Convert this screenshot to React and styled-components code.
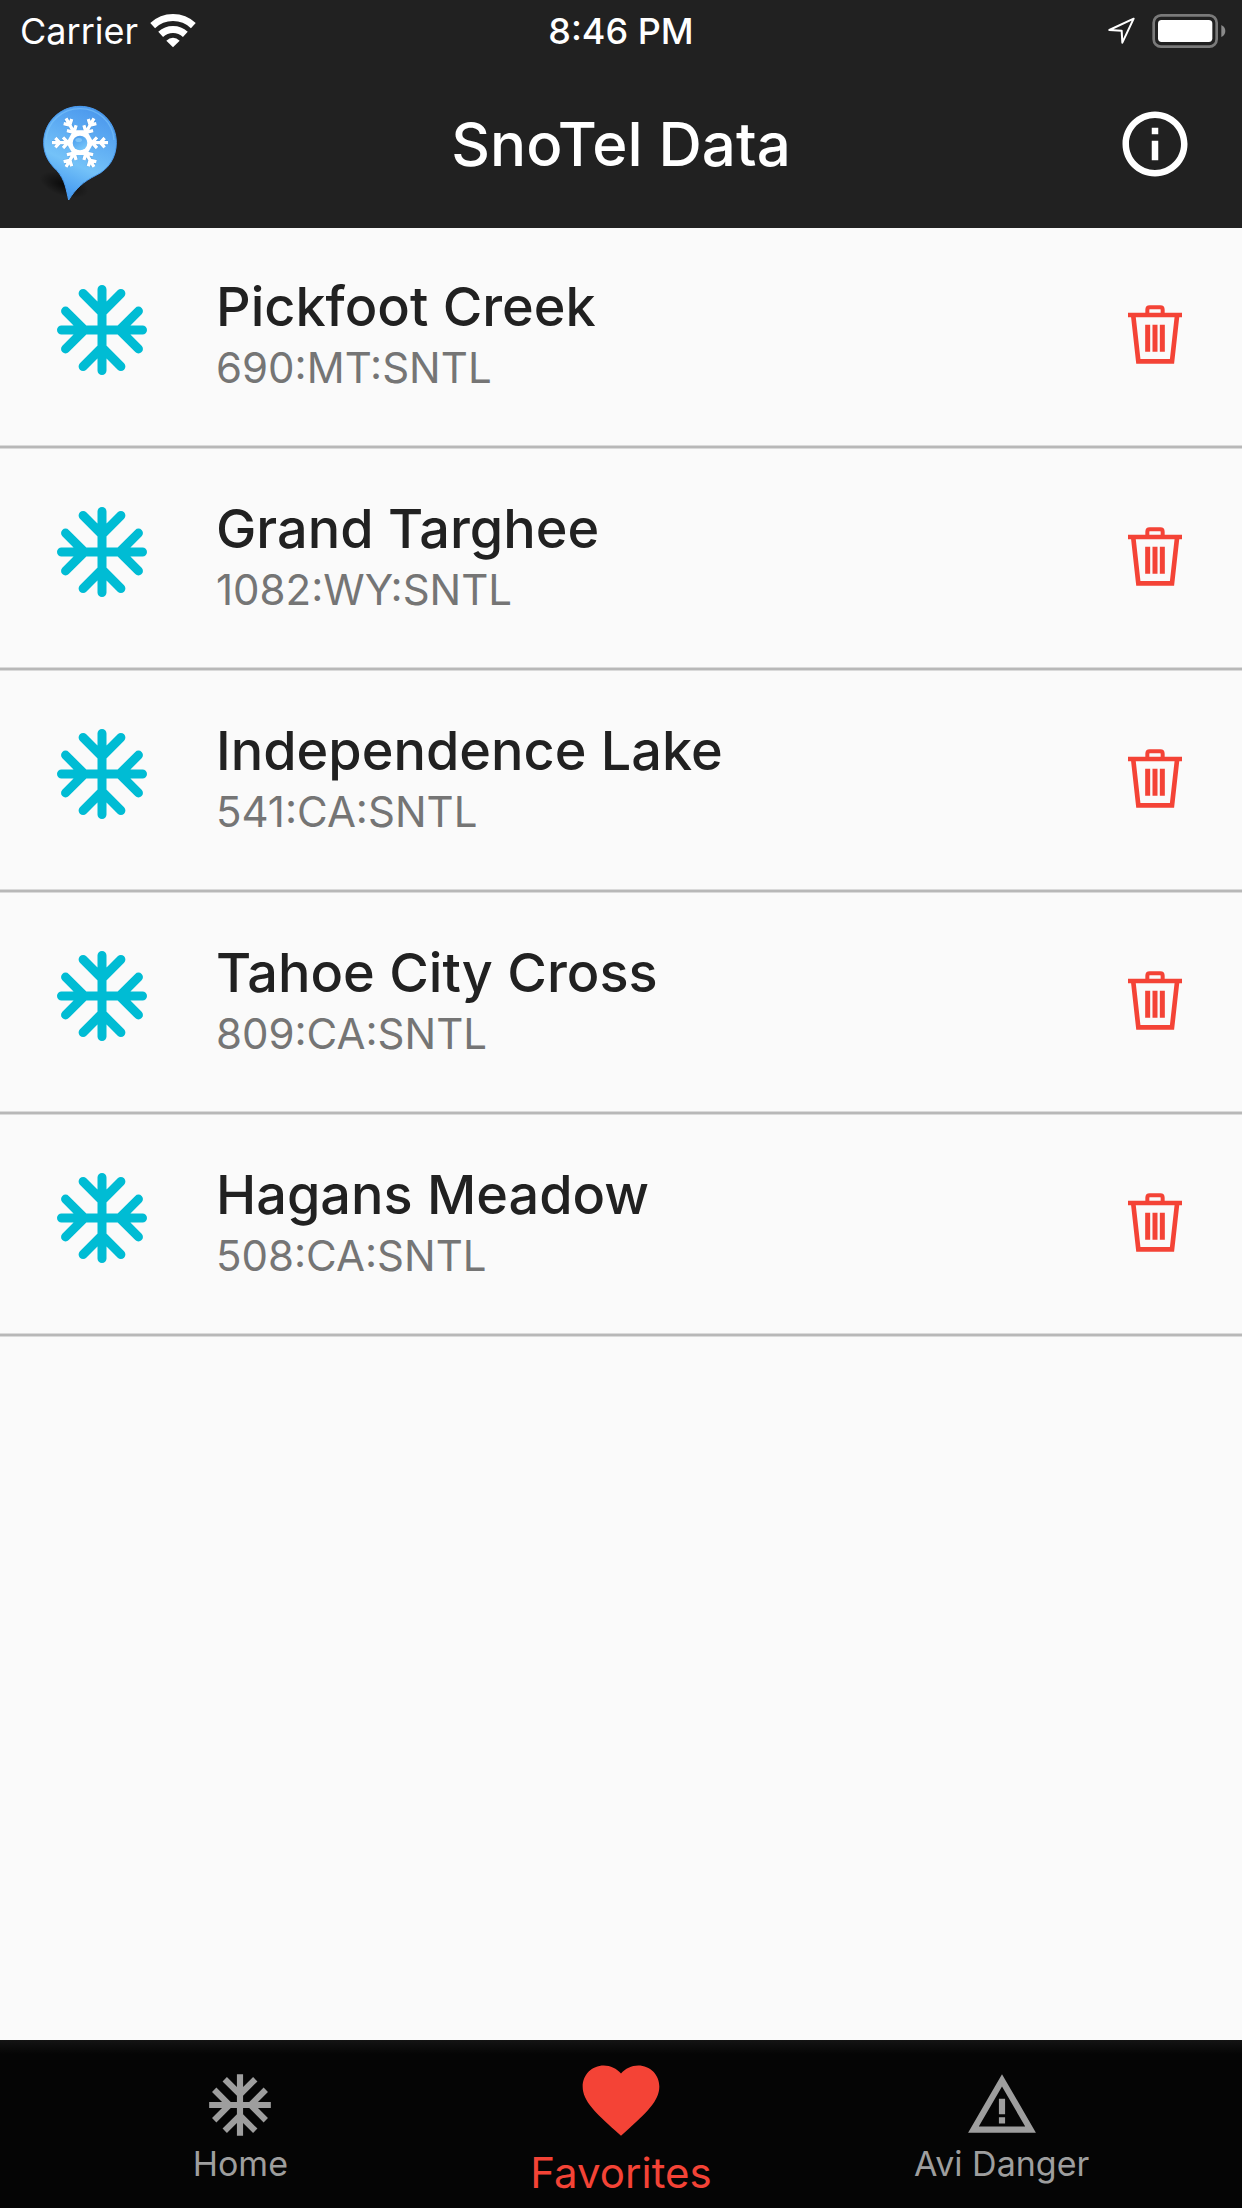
import React, { useState } from "react";
import styled, { createGlobalStyle } from "styled-components";
import { MdAcUnit, MdFavorite, MdInfoOutline, MdWarningAmber } from "react-icons/md";

const GlobalStyle = createGlobalStyle`
  *, *::before, *::after { box-sizing: border-box; }
  body {
    margin: 0;
    background: #fafafa;
    font-family: Inter, "Liberation Sans", sans-serif;
  }
  h1, h2, p, ul { margin: 0; padding: 0; }
  ul { list-style: none; }
  svg { display: block; flex: none; }
`;

const Screen = styled.div`
  display: flex;
  flex-direction: column;
  min-height: 100vh;
`;

const Header = styled.header`
  background: #212121;
  color: #fff;
`;

const StatusBar = styled.div`
  display: grid;
  grid-template-columns: 1fr auto 1fr;
  align-items: center;
  height: 60px;
  padding: 2px 16px 0;
  font-size: 36px;
  line-height: 44px;
`;

const StatusGroup = styled.div`
  display: flex;
  align-items: center;
  justify-content: ${(p) => (p.$end ? "flex-end" : "flex-start")};
  gap: ${(p) => (p.$end ? 16 : 12)}px;
  padding-left: 4px;
`;

const Clock = styled.time`
  font-weight: 500;
`;

const AppBar = styled.div`
  display: grid;
  grid-template-columns: 1fr auto 1fr;
  align-items: center;
  height: 168px;
  padding: 0 30px;
`;

const LogoSlot = styled.div`
  padding-top: 12px;
`;

const ActionSlot = styled.div`
  display: flex;
  justify-content: flex-end;
  padding-right: 18px;
`;

const AppTitle = styled.h1`
  font-size: 60px;
  line-height: 72px;
  font-weight: 500;
`;

const IconButton = styled.button`
  display: flex;
  align-items: center;
  justify-content: center;
  padding: 0;
  border: 0;
  background: none;
  color: ${(p) => p.$color};
  cursor: pointer;
`;

const StationList = styled.ul`
  flex: 1;
`;

const StationRow = styled.li`
  display: flex;
  align-items: flex-start;
  height: 217px;
  padding: 48px 60px 0 48px;
`;

const Divider = styled.li`
  height: 4px;
  margin-bottom: 1px;
  border: solid #dadada;
  border-width: 1px 0;
  background: #b8b8b8;
`;

const StationText = styled.div`
  flex: 1;
  padding-left: 60px;
`;

const StationName = styled.h2`
  font-size: 54px;
  line-height: 62px;
  font-weight: 500;
  color: #212121;
`;

const StationCode = styled.p`
  font-size: 42px;
  line-height: 60px;
  color: #757575;
`;

const DeleteButton = styled(IconButton)`
  height: 116px;
`;

const TabBar = styled.nav`
  display: flex;
  height: 168px;
  padding: 0 50px;
  background: linear-gradient(#141414, #050505 14px);
`;

const Tab = styled.a`
  flex: 1;
  display: flex;
  flex-direction: column;
  align-items: center;
  text-decoration: none;
  padding-top: ${(p) => (p.$active ? 14 : 28)}px;
  color: ${(p) => (p.$active ? "#f44336" : "#9e9e9e")};
  font-size: ${(p) => (p.$active ? 42 : 34)}px;
  line-height: ${(p) => (p.$active ? 54 : 44)}px;
`;

function WifiIcon() {
  return (
    <svg width="46" height="34" viewBox="447 38 138 102" fill="none" stroke="#fff" strokeWidth="21" aria-hidden="true">
      <path d="M455 73A89 89 0 0 1 577 73" />
      <path d="M479 99A54 54 0 0 1 553 99" />
      <path d="M516 138L496 118Q505 109 516 109Q527 109 536 118Z" fill="#fff" stroke="none" />
    </svg>
  );
}

function LocationIcon() {
  return (
    <svg width="28" height="28" viewBox="202 52 84 84" fill="none" stroke="#fff" strokeWidth="6" strokeLinejoin="round" aria-hidden="true">
      <path d="M279 57L206 91L243 93L245 129Z" />
    </svg>
  );
}

function BatteryIcon() {
  return (
    <svg width="74" height="34" viewBox="332 39 222 102" aria-hidden="true">
      <rect x="337" y="43" width="189" height="94" rx="22" fill="none" stroke="#7a7a7a" strokeWidth="8" />
      <rect x="350" y="57" width="163" height="66" rx="11" fill="#fff" />
      <path d="M540 72Q552 78 552 90Q552 102 540 108Z" fill="#8a8a8a" />
    </svg>
  );
}

function FlakeArm({ angle }) {
  return (
    <g transform={`rotate(${angle} 150 158)`}>
      <path d="M150 128V74M150 97L136 84M150 97L164 84M150 122L134 107M150 122L166 107" />
    </g>
  );
}

function PinLogo() {
  return (
    <svg width="100" height="120" viewBox="0 0 300 360" role="img" aria-label="SnoTel">
      <defs>
        <linearGradient id="pin" x1="0.75" y1="0" x2="0.4" y2="1">
          <stop offset="0" stopColor="#4a96ec" />
          <stop offset="0.28" stopColor="#5aa8f2" />
          <stop offset="0.65" stopColor="#74c2f8" />
          <stop offset="1" stopColor="#4197f0" />
        </linearGradient>
        <radialGradient id="pinShade">
          <stop offset="0" stopColor="#000" stopOpacity="0.7" />
          <stop offset="1" stopColor="#000" stopOpacity="0" />
        </radialGradient>
        <linearGradient id="drop" x1="0" y1="0" x2="0.6" y2="1">
          <stop offset="0" stopColor="#4596ea" />
          <stop offset="1" stopColor="#76c6fa" />
        </linearGradient>
      </defs>
      <ellipse cx="102" cy="284" rx="76" ry="34" transform="rotate(18 102 284)" fill="url(#pinShade)" />
      <path
        d="M150 49C211 49 259 98 259 158C259 202 236 238 198 256C160 275 137 296 116 330C109 302 106 269 80 241C55 217 41 192 41 158C41 98 89 49 150 49Z"
        fill="url(#pin)"
        stroke="#4a9cf0"
        strokeWidth="3"
      />
      <path d="M48 150C52 96 96 56 150 56C204 56 248 96 252 150" fill="none" stroke="#7cc4fa" strokeOpacity="0.6" strokeWidth="4" />
      <g fill="none" stroke="#2f6fb4" strokeOpacity="0.3" strokeWidth="13">
        {[30, 90, 150, 210, 270, 330].map((a) => (
          <FlakeArm key={a} angle={a} />
        ))}
      </g>
      <g fill="none" stroke="#fff" strokeWidth="10">
        {[30, 90, 150, 210, 270, 330].map((a) => (
          <FlakeArm key={a} angle={a} />
        ))}
      </g>
      <path d="M130 121H170L191 158L170 195H130L109 158Z" fill="#fff" />
      <circle cx="150" cy="159" r="22" fill="url(#drop)" />
      <ellipse cx="146" cy="150" rx="10" ry="6" fill="#8fd0fb" fillOpacity="0.7" />
    </svg>
  );
}

function SnowflakeIcon() {
  return (
    <svg width="108" height="108" viewBox="0 0 24 24" fill="none" stroke="#00bcd4" strokeWidth="2" strokeLinecap="round" aria-hidden="true">
      {[0, 90, 180, 270].map((a) => (
        <path key={a} transform={`rotate(${a} 12 12)`} d="M12 12V3M12 8.1L7.8 3.9M12 8.1L16.2 3.9" />
      ))}
    </svg>
  );
}

function TrashIcon() {
  return (
    <svg width="54" height="59" viewBox="0 0 162 177" fill="none" stroke="currentColor" strokeWidth="14" aria-hidden="true">
      <path d="M0 30H162" />
      <path d="M58 27V14Q58 7 65 7H97Q104 7 104 14V27" strokeWidth="12" />
      <path d="M16 34L31 169H132L147 34" />
      <path d="M59 59V140M81 59V140M103 59V140" strokeWidth="15" />
    </svg>
  );
}

const initialStations = [
  { name: "Pickfoot Creek", code: "690:MT:SNTL" },
  { name: "Grand Targhee", code: "1082:WY:SNTL" },
  { name: "Independence Lake", code: "541:CA:SNTL" },
  { name: "Tahoe City Cross", code: "809:CA:SNTL" },
  { name: "Hagans Meadow", code: "508:CA:SNTL" },
];

const tabs = [
  { label: "Home", href: "#home", Icon: MdAcUnit },
  { label: "Favorites", href: "#favorites", Icon: MdFavorite, active: true },
  { label: "Avi Danger", href: "#avi-danger", Icon: MdWarningAmber },
];

export default function App() {
  const [stations, setStations] = useState(initialStations);
  const remove = (code) => setStations((all) => all.filter((s) => s.code !== code));

  return (
    <Screen>
      <GlobalStyle />
      <Header>
        <StatusBar>
          <StatusGroup>
            <span>Carrier</span>
            <WifiIcon />
          </StatusGroup>
          <Clock>8:46 PM</Clock>
          <StatusGroup $end>
            <LocationIcon />
            <BatteryIcon />
          </StatusGroup>
        </StatusBar>
        <AppBar>
          <LogoSlot>
            <PinLogo />
          </LogoSlot>
          <AppTitle>SnoTel Data</AppTitle>
          <ActionSlot>
            <IconButton $color="#fff" aria-label="Information">
              <MdInfoOutline size={78} />
            </IconButton>
          </ActionSlot>
        </AppBar>
      </Header>
      <StationList>
        {stations.map(({ name, code }) => (
          <React.Fragment key={code}>
            <StationRow>
              <SnowflakeIcon />
              <StationText>
                <StationName>{name}</StationName>
                <StationCode>{code}</StationCode>
              </StationText>
              <DeleteButton $color="#f44336" aria-label={`Delete ${name}`} onClick={() => remove(code)}>
                <TrashIcon />
              </DeleteButton>
            </StationRow>
            <Divider role="separator" />
          </React.Fragment>
        ))}
      </StationList>
      <TabBar>
        {tabs.map(({ label, href, Icon, active }) => (
          <Tab key={label} href={href} $active={active} aria-current={active ? "page" : undefined}>
            <Icon size={active ? 92 : 74} />
            {label}
          </Tab>
        ))}
      </TabBar>
    </Screen>
  );
}
